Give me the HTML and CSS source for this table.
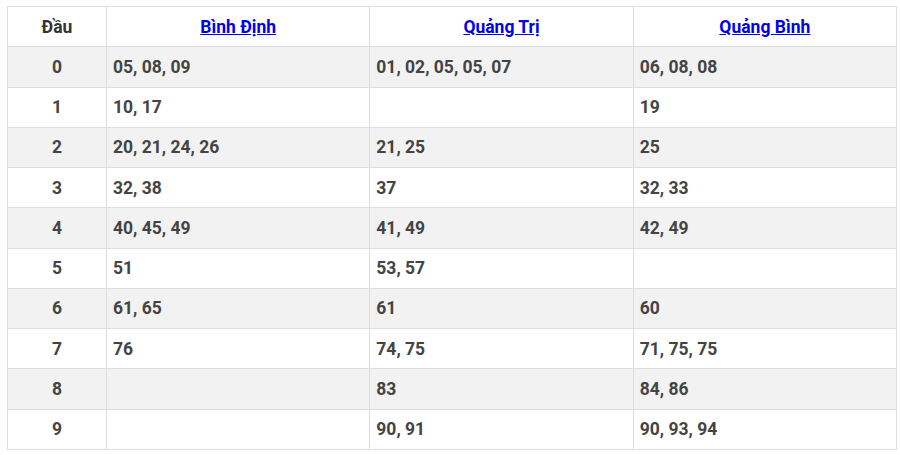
FILE: index.html
```html
<!DOCTYPE html>
<html>
<head>
<meta charset="utf-8">
<link rel="stylesheet" href="styles.css">
</head>
<body>
<table class="loto">
  <thead>
    <tr>
      <th class="c-head">Đầu</th>
      <th><a href="#">Bình Định</a></th>
      <th><a href="#">Quảng Trị</a></th>
      <th><a href="#">Quảng Bình</a></th>
    </tr>
  </thead>
  <tbody>
    <tr><td class="c-head">0</td><td>05, 08, 09</td><td>01, 02, 05, 05, 07</td><td>06, 08, 08</td></tr>
    <tr><td class="c-head">1</td><td>10, 17</td><td></td><td>19</td></tr>
    <tr><td class="c-head">2</td><td>20, 21, 24, 26</td><td>21, 25</td><td>25</td></tr>
    <tr><td class="c-head">3</td><td>32, 38</td><td>37</td><td>32, 33</td></tr>
    <tr><td class="c-head">4</td><td>40, 45, 49</td><td>41, 49</td><td>42, 49</td></tr>
    <tr><td class="c-head">5</td><td>51</td><td>53, 57</td><td></td></tr>
    <tr><td class="c-head">6</td><td>61, 65</td><td>61</td><td>60</td></tr>
    <tr><td class="c-head">7</td><td>76</td><td>74, 75</td><td>71, 75, 75</td></tr>
    <tr><td class="c-head">8</td><td></td><td>83</td><td>84, 86</td></tr>
    <tr><td class="c-head">9</td><td></td><td>90, 91</td><td>90, 93, 94</td></tr>
  </tbody>
</table>
</body>
</html>
```
FILE: styles.css
```css
html, body {
  margin: 0;
  padding: 0;
  background: #fff;
}
body {
  padding: 6px 3px 0 7px;
  font-family: Roboto, "Noto Sans", sans-serif;
}
.loto {
  width: 890px;
  border-collapse: collapse;
  table-layout: fixed;
  font-size: 17.5px;
  font-weight: bold;
  color: #444;
}
.loto th, .loto td {
  border: 1px solid #dddddd;
  height: 40.25px;
  padding: 0 6px;
  box-sizing: border-box;
}
.loto th {
  text-align: center;
  font-weight: bold;
  color: #333;
}
.loto th:first-child, .loto td:first-child {
  width: 99px;
}
.loto td {
  text-align: left;
}
.loto td.c-head {
  text-align: center;
}
.loto tbody tr:nth-child(odd) {
  background: #f2f2f2;
}
.loto th a {
  color: #0000ee;
  text-decoration: underline;
}
```
